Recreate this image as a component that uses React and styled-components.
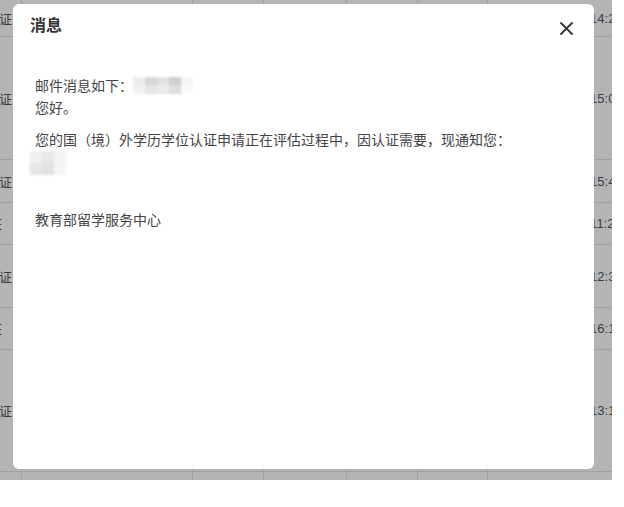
import React from 'react';
import styled, { createGlobalStyle } from 'styled-components';

const GlobalStyle = createGlobalStyle`
	html, body {
		margin: 0;
		background-color: #ffffff;
		font-family: "Noto Sans CJK SC", "Liberation Sans", sans-serif;
	}
`;

const COLS = '22px 171px 71px 83px 71px 70px 124px';
const DIM = 'rgb(180, 180, 180)';
const DIM_LINE = 'rgb(160, 160, 160)';

const Page = styled.div`
	position: relative;
	width: 612px;
	height: 480px;
	overflow: hidden;
	background-color: ${DIM};
`;

const Table = styled.div`
	display: flex;
	flex-direction: column;
	color: #3c3c3c;
	font-size: 13px;
	background-color: ${DIM};
`;

const Row = styled.div`
	display: grid;
	grid-template-columns: ${COLS};
	height: ${props => props.h}px;
	border-bottom: 1px solid ${DIM_LINE};
	box-sizing: border-box;
	background-color: ${DIM};
`;

const Cell = styled.div`
	display: flex;
	align-items: center;
	overflow: hidden;
	white-space: nowrap;
	border-right: 1px solid ${DIM_LINE};
	padding: 0 8px;
	background-color: ${DIM};
	font-family: "Liberation Sans", "Noto Sans CJK SC", sans-serif;
`;

const TailCell = styled(Cell)`
	justify-content: flex-end;
	padding: 0 ${props => props.pad}px 0 0;
	font-family: "Noto Sans CJK SC", sans-serif;
`;

const TimeCell = styled(Cell)`
	padding: 0 0 0 32px;
	border-right: none;
`;

const Dialog = styled.div`
	position: absolute;
	left: 13px;
	top: 4px;
	width: 581px;
	height: 465px;
	background: #fff;
	border-radius: 6px;
	display: flex;
	flex-direction: column;
`;

const Header = styled.div`
	display: flex;
	align-items: center;
	justify-content: space-between;
	height: 40px;
	padding: 0 21px 0 17px;
	margin-bottom: 6px;
`;

const Title = styled.div`
	font-size: 16px;
	font-weight: bold;
	color: #333;
`;

const Close = styled.button`
	border: none;
	background: none;
	padding: 0;
	width: 14px;
	height: 14px;
	margin-top: 8px;
	display: flex;
	align-items: center;
	justify-content: center;
	cursor: pointer;
`;

const Body = styled.div`
	display: flex;
	flex-direction: column;
	padding: 24px 22px 0;
	font-size: 14px;
	color: #444;
`;

const Line = styled.div`
	line-height: 22px;
	height: 22px;
	margin-top: ${props => props.gap || 0}px;
	white-space: nowrap;
	display: flex;
	align-items: center;
`;

const Mosaic = styled.div`
	display: grid;
	grid-template-columns: repeat(${props => props.cols}, 1fr);
	width: ${props => props.w}px;
	height: ${props => props.h}px;
	margin-left: ${props => props.offset || 0}px;
	margin-top: ${props => props.top || 0}px;
	filter: blur(1.2px);
`;

const Tile = styled.span`
	background: ${props => props.c};
`;

const rows = [
	{ h: 37, name: '学历认证', pad: 9, time: '2021-04-12 14:25:36' },
	{ h: 123, name: '学历认证', pad: 9, time: '2021-04-15 15:03:12' },
	{ h: 43, name: '学历认证', pad: 9, time: '2021-04-20 15:42:08' },
	{ h: 42, name: '学位认证', pad: 19, time: '2021-05-02 11:23:51' },
	{ h: 63, name: '学历认证', pad: 9, time: '2021-05-09 12:37:44' },
	{ h: 42, name: '学位认证', pad: 19, time: '2021-05-16 16:15:20' },
	{ h: 122, name: '学历认证', pad: 9, time: '2021-05-21 13:18:09' },
	{ h: 10, name: '', pad: 9, time: '' },
];

const mosaicA = ['#ececec', '#d6d6d6', '#e2e2e2', '#cfcfcf', '#f6f6f6', '#f1f1f1', '#e4e4e4', '#ebebeb', '#dedede', '#fafafa'];
const mosaicB = ['#f0f0f0', '#e8e8e8', '#f3f3f3', '#e6e6e6', '#e2e2e2', '#f4f4f4'];

const App = () => (
	<>
		<GlobalStyle />
		<Page>
			<Table>
				{rows.map((r, i) => (
					<Row key={i} h={r.h}>
						<TailCell pad={r.pad}>{r.name}</TailCell>
						<Cell>{r.name ? '教育部留学服务中心' : ''}</Cell>
						<Cell>{r.name ? '已读' : ''}</Cell>
						<Cell>{r.name ? '邮件' : ''}</Cell>
						<Cell>{r.name ? '查看' : ''}</Cell>
						<Cell>{r.name ? '消息' : ''}</Cell>
						<TimeCell>{r.time}</TimeCell>
					</Row>
				))}
			</Table>
			<Dialog>
				<Header>
					<Title>消息</Title>
					<Close aria-label="关闭">
						<svg width="13" height="13" viewBox="0 0 13 13">
							<path d="M1 1L12 12M12 1L1 12" stroke="#333" strokeWidth="1.8" strokeLinecap="round" />
						</svg>
					</Close>
				</Header>
				<Body>
					<Line>
						邮件消息如下：
						<Mosaic cols={5} w={60} h={17}>
							{mosaicA.map((c, i) => <Tile key={i} c={c} />)}
						</Mosaic>
					</Line>
					<Line>您好。</Line>
					<Line gap={10}>您的国（境）外学历学位认证申请正在评估过程中，因认证需要，现通知您：</Line>
					<Mosaic cols={3} w={36} h={24} offset={-5} top={1}>
						{mosaicB.map((c, i) => <Tile key={i} c={c} />)}
					</Mosaic>
					<Line gap={33}>教育部留学服务中心</Line>
				</Body>
			</Dialog>
		</Page>
	</>
);

export default App;
